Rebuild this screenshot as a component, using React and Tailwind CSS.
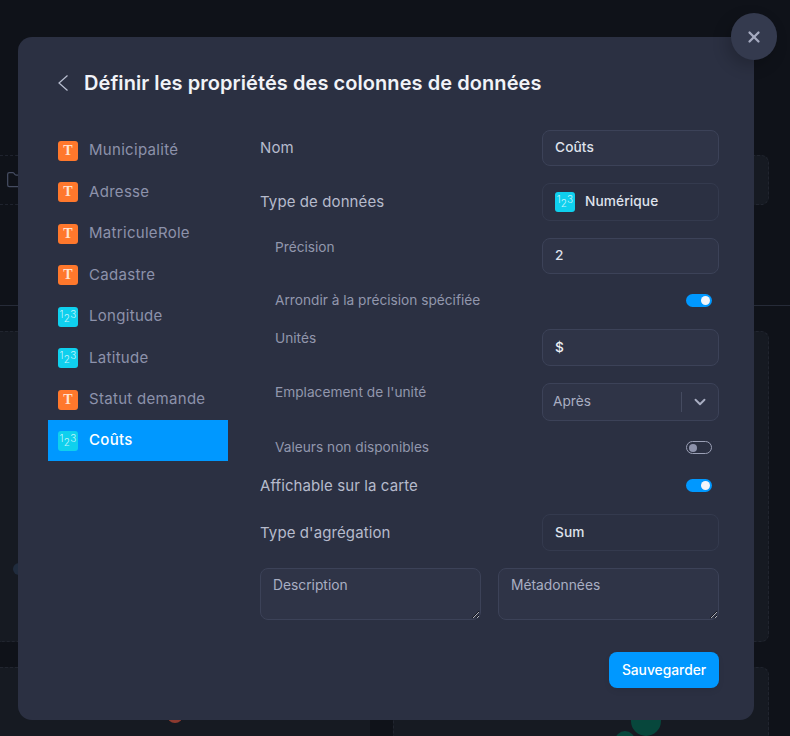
import React from "react";
import { X, ChevronDown, Folder } from "lucide-react";

const FONT = "font-['Inter','Liberation_Sans',sans-serif]";

function TypeIcon({ kind }) {
  if (kind === "T") {
    return (
      <span className="flex h-5 w-5 shrink-0 items-center justify-center rounded-[3px] bg-[#ff782c] font-['Liberation_Serif',serif] text-[14px] font-bold leading-none text-[#ffe3d0]">
        T
      </span>
    );
  }
  return (
    <span className="flex h-5 w-5 shrink-0 items-start justify-center rounded-[3px] bg-[#0fd0ee] pt-[2px] text-[10px] font-light leading-none text-[#c4f3fb]">
      <span>1</span>
      <span className="mt-[4px]">2</span>
      <span>3</span>
    </span>
  );
}

function Toggle({ on }) {
  return on ? (
    <span className="flex h-[13px] w-[26px] items-center justify-end rounded-full bg-[#0098ff] pr-[2px]">
      <span className="h-[9px] w-[9px] rounded-full bg-[#f2f5fa]" />
    </span>
  ) : (
    <span className="flex h-[13px] w-[26px] items-center rounded-full border border-[#9a9fb5] pl-[2px]">
      <span className="h-[8px] w-[8px] rounded-full bg-[#8d92ab]" />
    </span>
  );
}

function Box({ children, h, filled, strong }) {
  return (
    <div
      className={`flex w-[177px] items-center rounded-lg border px-3 pb-px text-[13.7px] font-medium ${h} ${
        filled ? "border-[#3c4258] bg-[#2f3447]" : "border-[#343a4e]"
      } ${strong ? "text-[#eef0f6]" : "text-[#dfe2ec]"}`}
    >
      {children}
    </div>
  );
}

const columns = [
  ["T", "Municipalité", "mt-0"],
  ["T", "Adresse", "mt-[0.5px]"],
  ["T", "MatriculeRole", "mt-[0.5px]"],
  ["T", "Cadastre", "mt-[0.5px]"],
  ["N", "Longitude", "mt-[0.5px]"],
  ["N", "Latitude", "mt-[0.5px]"],
  ["T", "Statut demande", "mt-[0.5px]"],
];

export default function App() {
  return (
    <div className={`relative h-[736px] w-[790px] overflow-hidden bg-[#0f1219] ${FONT}`}>
      {/* page behind the dialog */}
      <div className="h-[155px]" />
      <div className="flex h-[50px]">
        <div className="flex w-[370px] items-center border-y border-dashed border-[#1f232e] pl-[6px] text-[#454c61]">
          <Folder size={20} strokeWidth={1.5} />
        </div>
        <div className="ml-auto mr-[21px] h-full w-[370px] rounded-lg border border-dashed border-[#21252f] bg-[#161a22]" />
      </div>
      <div className="mt-[100px] h-px bg-[#262b38]" />
      <div className="mt-[25px] flex h-[311px] gap-[23px] pr-[21px]">
        <div className="relative flex-1 rounded-r-lg border-y border-dashed border-[#21252f] bg-[#161a22]">
          <span className="absolute left-[13px] top-[231px] h-3 w-3 rounded-full bg-[#202c3e]" />
        </div>
        <div className="w-[376px] rounded-lg border border-dashed border-[#21252f] bg-[#161a22]" />
      </div>
      <div className="mt-[25px] flex h-[80px] gap-[23px] pr-[21px]">
        <div className="relative flex-1 overflow-hidden rounded-tr-lg border-t border-dashed border-[#21252f] bg-[#161a22]">
          <span className="absolute left-[167px] top-[39px] h-4 w-4 rounded-full bg-[#8d3a30]" />
        </div>
        <div className="relative w-[376px] overflow-hidden rounded-t-lg border border-dashed border-[#21252f] bg-[#161a22]">
          <span className="absolute left-[237px] top-[30px] h-[38px] w-[30px] rounded-full bg-[#07473c]" />
          <span className="absolute left-[221px] top-[63px] h-5 w-5 rounded-full bg-[#07473c]" />
        </div>
      </div>

      {/* dialog */}
      <div className="absolute left-[18px] top-[37px] h-[683px] w-[736px] rounded-[14px] bg-[#2b3042] pl-[30px] pr-[35px]">
        <div className="flex h-[92px] items-center pl-[10px]">
          <svg width="10" height="16" viewBox="0 0 10 16" fill="none" className="mr-[16px] text-[#b9bed0]">
            <path d="M9.5 0.5 L1 8 L9.5 15.5" stroke="currentColor" strokeWidth="1.2" />
          </svg>
          <h1 className="text-[20px] font-semibold tracking-[0.065px] text-[#f1f3f8]">
            Définir les propriétés des colonnes de données
          </h1>
        </div>

        <div className="flex gap-[32px]">
          <ul className="w-[180px] pt-px">
            {columns.map(([kind, name, cls]) => (
              <li
                key={name}
                className={`flex h-[41px] items-center gap-[11px] pl-[10px] text-[15px] tracking-[0.3px] text-[#8d92ab] ${cls}`}
              >
                <TypeIcon kind={kind} />
                {name}
              </li>
            ))}
            <li className="flex h-[41px] items-center gap-[11px] bg-[#0098ff] pl-[10px] text-[15px] font-medium tracking-[0.3px] text-white">
              <TypeIcon kind="N" />
              Coûts
            </li>
          </ul>

          <div className="w-[459px] pt-px">
            <div className="flex items-center justify-between text-[15px] tracking-[0.1px] text-[#b6bbcc]">
              <span>Nom</span>
              <Box h="h-9" filled>Coûts</Box>
            </div>
            <div className="mt-[17px] flex items-center justify-between text-[15px] tracking-[0.1px] text-[#b6bbcc]">
              <span>Type de données</span>
              <Box h="h-[38px]">
                <TypeIcon kind="N" />
                <span className="ml-[10px]">Numérique</span>
              </Box>
            </div>
            <div className="mt-[17px] flex items-center justify-between pl-[15px] text-[13.7px] text-[#9297ad]">
              <span className="-mt-[18px]">Précision</span>
              <Box h="h-9" filled>2</Box>
            </div>
            <div className="mt-[20px] flex h-[13px] items-center justify-between pl-[15px] pr-[7px] text-[13.7px] text-[#9297ad]">
              <span>Arrondir à la précision spécifiée</span>
              <Toggle on />
            </div>
            <div className="mt-[22px] flex items-center justify-between pl-[15px] text-[13.7px] text-[#9297ad]">
              <span className="-mt-[19px]">Unités</span>
              <Box h="h-[37px]" filled strong>$</Box>
            </div>
            <div className="mt-[17px] flex items-center justify-between pl-[15px] text-[13.7px] text-[#9297ad]">
              <span className="-mt-[20px]">Emplacement de l'unité</span>
              <div className="flex h-[38px] w-[177px] items-center rounded-lg border border-[#3c4258] bg-[#2f3447] pb-px pl-[10px] pr-[9px] text-[13.7px] text-[#a9aec2]">
                <span className="flex-1">Après</span>
                <span className="h-[20px] w-px bg-[#454b60]" />
                <ChevronDown size={18} strokeWidth={2.5} className="ml-[9px] text-[#a9aec2]" />
              </div>
            </div>
            <div className="mt-[20px] flex h-[13px] items-center justify-between pl-[15px] pr-[7px] text-[13.7px] text-[#9297ad]">
              <span>Valeurs non disponibles</span>
              <Toggle />
            </div>
            <div className="mt-[25px] flex h-[13px] items-center justify-between pr-[7px] text-[15px] tracking-[0.1px] text-[#b6bbcc]">
              <span className="mt-[2px]">Affichable sur la carte</span>
              <Toggle on />
            </div>
            <div className="mt-[22px] flex items-center justify-between text-[15px] tracking-[0.1px] text-[#b6bbcc]">
              <span className="mt-[2px]">Type d'agrégation</span>
              <Box h="h-[37px]">Sum</Box>
            </div>
            <div className="mt-[17px] flex justify-between">
              <textarea
                readOnly
                defaultValue="Description"
                className="h-[52px] w-[221px] rounded-lg border border-[#3c4258] bg-[#2f3447] px-3 py-[6px] text-[13.8px] text-[#a9aec2] outline-none"
              />
              <textarea
                readOnly
                defaultValue="Métadonnées"
                className="h-[52px] w-[221px] rounded-lg border border-[#3c4258] bg-[#2f3447] px-3 py-[6px] text-[13.8px] text-[#a9aec2] outline-none"
              />
            </div>
            <div className="mt-[32px] flex justify-end">
              <button className="h-9 w-[110px] rounded-lg bg-[#0098ff] text-[13.8px] font-medium text-white shadow-[0_3px_6px_rgba(0,0,0,0.06)]">
                Sauvegarder
              </button>
            </div>
          </div>
        </div>
      </div>

      {/* close button */}
      <button className="absolute left-[731px] top-[13px] flex h-[47px] w-[46px] items-center justify-center rounded-full bg-[#343a4e] text-[#a6abc0] shadow-[-4px_6px_16px_rgba(0,0,0,0.2)]">
        <X size={18} strokeWidth={3} />
      </button>
    </div>
  );
}
